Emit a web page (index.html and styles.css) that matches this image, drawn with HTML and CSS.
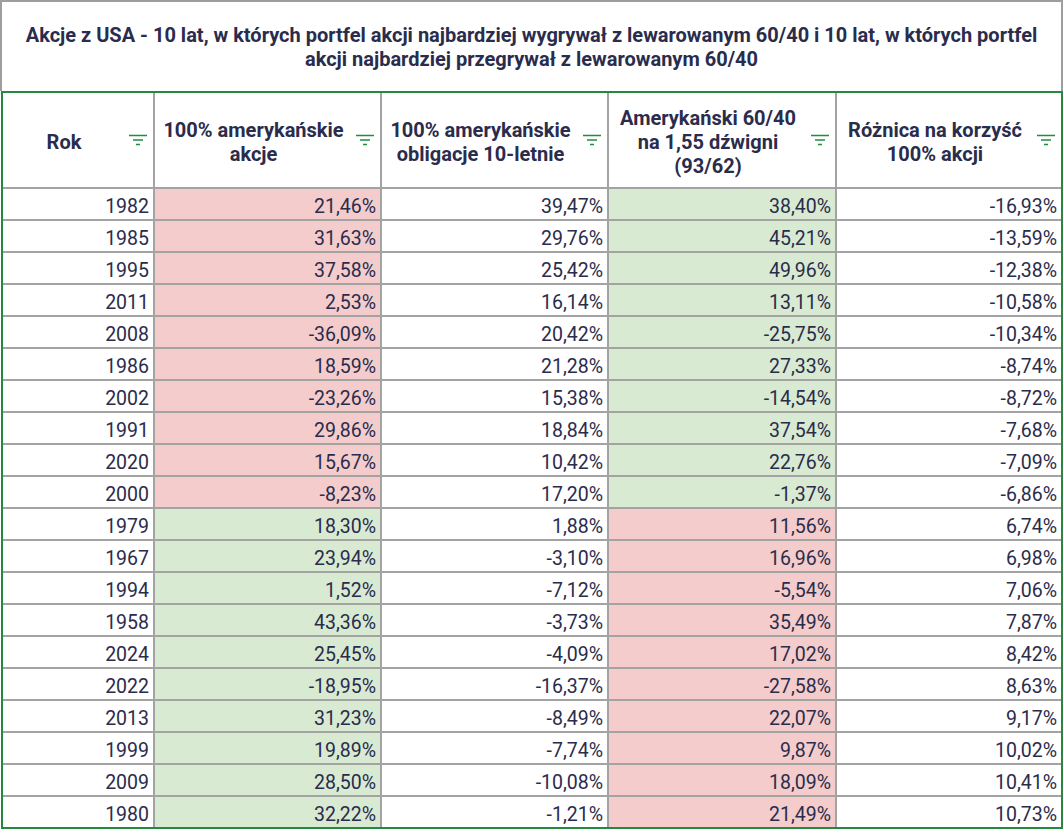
FILE: index.html
```html
<!DOCTYPE html>
<html lang="pl">
<head>
<meta charset="utf-8">
<title>Akcje z USA</title>
<link rel="stylesheet" href="styles.css">
</head>
<body>
<div class="sheet">
  <div class="title">Akcje z USA - 10 lat, w których portfel akcji najbardziej wygrywał z lewarowanym 60/40 i 10 lat, w których portfel akcji najbardziej przegrywał z lewarowanym 60/40</div>
  <div class="grid">
    <div class="hcell"><span class="htext">Rok</span><svg class="filter" viewBox="0 0 18 12" width="18" height="12"><path d="M0 1.5H18M4 6H14M7 10.5H11"/></svg></div>
    <div class="hcell"><span class="htext">100% amerykańskie akcje</span><svg class="filter" viewBox="0 0 18 12" width="18" height="12"><path d="M0 1.5H18M4 6H14M7 10.5H11"/></svg></div>
    <div class="hcell"><span class="htext">100% amerykańskie obligacje 10-letnie</span><svg class="filter" viewBox="0 0 18 12" width="18" height="12"><path d="M0 1.5H18M4 6H14M7 10.5H11"/></svg></div>
    <div class="hcell"><span class="htext">Amerykański 60/40<br>na 1,55 dźwigni<br>(93/62)</span><svg class="filter" viewBox="0 0 18 12" width="18" height="12"><path d="M0 1.5H18M4 6H14M7 10.5H11"/></svg></div>
    <div class="hcell"><span class="htext">Różnica na korzyść<br>100% akcji</span><svg class="filter" viewBox="0 0 18 12" width="18" height="12"><path d="M0 1.5H18M4 6H14M7 10.5H11"/></svg></div>

    <div class="c">1982</div><div class="c red">21,46%</div><div class="c">39,47%</div><div class="c green">38,40%</div><div class="c">-16,93%</div>
    <div class="c">1985</div><div class="c red">31,63%</div><div class="c">29,76%</div><div class="c green">45,21%</div><div class="c">-13,59%</div>
    <div class="c">1995</div><div class="c red">37,58%</div><div class="c">25,42%</div><div class="c green">49,96%</div><div class="c">-12,38%</div>
    <div class="c">2011</div><div class="c red">2,53%</div><div class="c">16,14%</div><div class="c green">13,11%</div><div class="c">-10,58%</div>
    <div class="c">2008</div><div class="c red">-36,09%</div><div class="c">20,42%</div><div class="c green">-25,75%</div><div class="c">-10,34%</div>
    <div class="c">1986</div><div class="c red">18,59%</div><div class="c">21,28%</div><div class="c green">27,33%</div><div class="c">-8,74%</div>
    <div class="c">2002</div><div class="c red">-23,26%</div><div class="c">15,38%</div><div class="c green">-14,54%</div><div class="c">-8,72%</div>
    <div class="c">1991</div><div class="c red">29,86%</div><div class="c">18,84%</div><div class="c green">37,54%</div><div class="c">-7,68%</div>
    <div class="c">2020</div><div class="c red">15,67%</div><div class="c">10,42%</div><div class="c green">22,76%</div><div class="c">-7,09%</div>
    <div class="c">2000</div><div class="c red">-8,23%</div><div class="c">17,20%</div><div class="c green">-1,37%</div><div class="c">-6,86%</div>
    <div class="c">1979</div><div class="c green">18,30%</div><div class="c">1,88%</div><div class="c red">11,56%</div><div class="c">6,74%</div>
    <div class="c">1967</div><div class="c green">23,94%</div><div class="c">-3,10%</div><div class="c red">16,96%</div><div class="c">6,98%</div>
    <div class="c">1994</div><div class="c green">1,52%</div><div class="c">-7,12%</div><div class="c red">-5,54%</div><div class="c">7,06%</div>
    <div class="c">1958</div><div class="c green">43,36%</div><div class="c">-3,73%</div><div class="c red">35,49%</div><div class="c">7,87%</div>
    <div class="c">2024</div><div class="c green">25,45%</div><div class="c">-4,09%</div><div class="c red">17,02%</div><div class="c">8,42%</div>
    <div class="c">2022</div><div class="c green">-18,95%</div><div class="c">-16,37%</div><div class="c red">-27,58%</div><div class="c">8,63%</div>
    <div class="c">2013</div><div class="c green">31,23%</div><div class="c">-8,49%</div><div class="c red">22,07%</div><div class="c">9,17%</div>
    <div class="c">1999</div><div class="c green">19,89%</div><div class="c">-7,74%</div><div class="c red">9,87%</div><div class="c">10,02%</div>
    <div class="c">2009</div><div class="c green">28,50%</div><div class="c">-10,08%</div><div class="c red">18,09%</div><div class="c">10,41%</div>
    <div class="c">1980</div><div class="c green">32,22%</div><div class="c">-1,21%</div><div class="c red">21,49%</div><div class="c">10,73%</div>
  </div>
</div>
</body>
</html>
```

FILE: styles.css
```css
html, body {
  margin: 0;
  padding: 0;
  background: #ffffff;
}

body {
  font-family: Roboto, "Liberation Sans", sans-serif;
  color: #2a2c4c;
}

.sheet {
  width: 1063px;
}

.title {
  box-sizing: border-box;
  height: 91px;
  border: 2px solid #9e9e9e;
  border-bottom: 0;
  display: flex;
  align-items: center;
  justify-content: center;
  text-align: center;
  font-size: 20px;
  font-weight: 700;
  line-height: 24px;
  padding: 1px 20px 0;
}

.grid {
  margin-left: 1px;
  width: 1062px;
  box-sizing: border-box;
  border: 2px solid #23893f;
  background: #a3a3a3;
  display: grid;
  grid-template-columns: 150px 225px 225px 226px 224px;
  grid-template-rows: 94px repeat(20, 30px);
  gap: 2px;
}

.hcell {
  background: #ffffff;
  display: flex;
  align-items: center;
  gap: 4px;
  padding-right: 6px;
  font-size: 20px;
  font-weight: 700;
  line-height: 24px;
}

.htext {
  flex: 1;
  text-align: center;
  padding-top: 4px;
}

.filter {
  flex: none;
  fill: none;
  stroke: #1f8f3f;
  stroke-width: 1.6;
}

.c {
  background: #ffffff;
  box-sizing: border-box;
  text-align: right;
  padding: 6px 4px 0 0;
  font-size: 19.5px;
  line-height: 24px;
  white-space: nowrap;
}

.c.red {
  background: #f4cccc;
}

.c.green {
  background: #d9ead3;
}
```
